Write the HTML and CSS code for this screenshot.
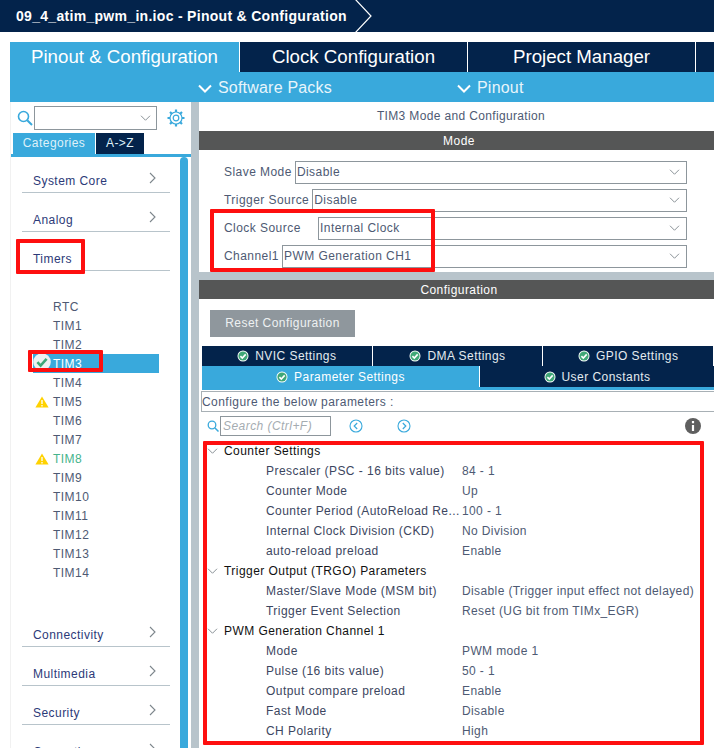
FILE: index.html
```html
<!DOCTYPE html>
<html lang="en">
<head>
	<meta charset="UTF-8">
	<title>Pinout &amp; Configuration</title>
	<link rel="stylesheet" href="styles.css">
</head>
<body>
	<svg class="defs" width="0" height="0">
		<symbol id="ok" viewBox="0 0 12 12">
			<circle cx="6" cy="6" r="5.5" fill="#fff"/>
			<circle cx="6" cy="6" r="4.6" fill="#3fa777"/>
			<path d="M3.4 6.1 5.3 8 8.7 4.4" fill="none" stroke="#fff" stroke-width="1.6"/>
		</symbol>
		<symbol id="bigOk" viewBox="0 0 18 18">
			<circle cx="9" cy="9" r="8.8" fill="#eef1f2"/>
			<path d="M4.4 9.2 7.6 12.6 13.6 5.8" fill="none" stroke="#3fa777" stroke-width="2.6"/>
		</symbol>
		<symbol id="warn" viewBox="0 0 14 12">
			<path d="M7 .5 13.6 11.5H.4Z" fill="#ffd200"/>
			<path d="M7 4v4M7 9v1.4" stroke="#fff" stroke-width="1.3"/>
		</symbol>
		<symbol id="down" viewBox="0 0 14 8">
			<path d="M1 1 7 7 13 1" fill="none" stroke="currentColor" stroke-width="1.2"/>
		</symbol>
		<symbol id="downBold" viewBox="0 0 14 9">
			<path d="M1 1.5 7 7.5 13 1.5" fill="none" stroke="#fff" stroke-width="2"/>
		</symbol>
		<symbol id="right" viewBox="0 0 7 12">
			<path d="M1 1 6 6 1 11" fill="none" stroke="#7d868c" stroke-width="1.1"/>
		</symbol>
	</svg>

	<!-- title bar -->
	<div class="crumb">
		<span class="crumbText">09_4_atim_pwm_in.ioc - Pinout &amp; Configuration</span>
		<svg class="crumbArrow" width="18" height="32" viewBox="0 0 18 32"><path d="M1 -1 17 16 1 33" fill="none" stroke="#fff" stroke-width="1.2"/></svg>
	</div>

	<div class="app">
		<div class="mainTabs">
			<div class="mainTab tabOn">Pinout &amp; Configuration</div>
			<div class="mainTab">Clock Configuration</div>
			<div class="mainTab">Project Manager</div>
			<div class="mainTab tabEnd"></div>
		</div>
		<div class="subBar">
			<div class="subItem subPacks"><svg class="subArrow"><use href="#downBold"/></svg>Software Packs</div>
			<div class="subItem subPinout"><svg class="subArrow"><use href="#downBold"/></svg>Pinout</div>
		</div>

		<div class="work">
			<!-- left side -->
			<div class="side">
				<div class="sideSearch">
					<svg class="lens" width="16" height="16" viewBox="0 0 16 16"><circle cx="6.5" cy="6.5" r="5" fill="none" stroke="#39a9dc" stroke-width="1.6"/><path d="M10.2 10.2 15 15" stroke="#39a9dc" stroke-width="2"/></svg>
					<div class="sideSelect"><svg class="selArrow"><use href="#down"/></svg></div>
					<svg class="gear" width="18" height="18" viewBox="0 0 18 18">
						<circle cx="9" cy="9" r="6" fill="none" stroke="#39a9dc" stroke-width="1.2"/>
						<circle cx="9" cy="9" r="2.8" fill="none" stroke="#39a9dc" stroke-width="1.2"/>
						<path d="M9 .5V3M9 15v2.5M.5 9H3M15 9h2.5M3 3l1.8 1.8M13.2 13.2 15 15M15 3l-1.8 1.8M4.8 13.2 3 15" stroke="#39a9dc" stroke-width="2.2"/>
					</svg>
				</div>
				<div class="sideTabs">
					<div class="sideTab sideTabOn">Categories</div>
					<div class="sideTab sideTabAz">A-&gt;Z</div>
				</div>
				<div class="sideBody">
					<div class="sideList">
						<div class="cat"><span>System Core</span><svg class="catArrow"><use href="#right"/></svg></div>
						<div class="cat"><span>Analog</span><svg class="catArrow"><use href="#right"/></svg></div>
						<div class="cat"><span>Timers</span></div>
						<ul class="timList">
							<li>RTC</li>
							<li>TIM1</li>
							<li>TIM2</li>
							<li class="timOn"><svg class="timIcon okIcon"><use href="#bigOk"/></svg>TIM3</li>
							<li>TIM4</li>
							<li><svg class="timIcon"><use href="#warn"/></svg>TIM5</li>
							<li>TIM6</li>
							<li>TIM7</li>
							<li class="timGreen"><svg class="timIcon"><use href="#warn"/></svg>TIM8</li>
							<li>TIM9</li>
							<li>TIM10</li>
							<li>TIM11</li>
							<li>TIM12</li>
							<li>TIM13</li>
							<li>TIM14</li>
						</ul>
						<div class="cat"><span>Connectivity</span><svg class="catArrow"><use href="#right"/></svg></div>
						<div class="cat"><span>Multimedia</span><svg class="catArrow"><use href="#right"/></svg></div>
						<div class="cat"><span>Security</span><svg class="catArrow"><use href="#right"/></svg></div>
						<div class="cat"><span>Computing</span><svg class="catArrow"><use href="#right"/></svg></div>
					</div>
					<div class="scroll"></div>
				</div>
			</div>

			<!-- right side -->
			<div class="panel">
				<div class="panelTitle">TIM3 Mode and Configuration</div>
				<div class="darkBar">Mode</div>
				<div class="modeBox">
					<div class="modeRow"><label>Slave Mode</label><div class="combo">Disable<svg class="selArrow"><use href="#down"/></svg></div></div>
					<div class="modeRow"><label>Trigger Source</label><div class="combo">Disable<svg class="selArrow"><use href="#down"/></svg></div></div>
					<div class="modeRow"><label class="wideLabel">Clock Source</label><div class="combo">Internal Clock<svg class="selArrow"><use href="#down"/></svg></div></div>
					<div class="modeRow"><label>Channel1</label><div class="combo">PWM Generation CH1<svg class="selArrow"><use href="#down"/></svg></div></div>
				</div>
				<div class="darkBar confBar">Configuration</div>
				<div class="resetRow"><div class="resetBtn">Reset Configuration</div></div>
				<div class="setTabs">
					<div class="setTab"><svg class="setIcon"><use href="#ok"/></svg>NVIC Settings</div>
					<div class="setTab"><svg class="setIcon"><use href="#ok"/></svg>DMA Settings</div>
					<div class="setTab"><svg class="setIcon"><use href="#ok"/></svg>GPIO Settings</div>
				</div>
				<div class="setTabs setTabs2">
					<div class="setTab setOn"><svg class="setIcon"><use href="#ok"/></svg>Parameter Settings</div>
					<div class="setTab setUser"><svg class="setIcon"><use href="#ok"/></svg>User Constants</div>
				</div>
				<div class="paramHint">Configure the below parameters :</div>
				<div class="findRow">
					<svg width="12" height="12" viewBox="0 0 12 12"><circle cx="5" cy="5" r="3.8" fill="none" stroke="#39a9dc" stroke-width="1.3"/><path d="M8 8 11.5 11.5" stroke="#39a9dc" stroke-width="1.5"/></svg>
					<div class="findInput">Search (Ctrl+F)</div>
					<svg class="navLeft" width="14" height="14" viewBox="0 0 14 14"><circle cx="7" cy="7" r="6" fill="none" stroke="#39a9dc" stroke-width="1.1"/><path d="M8.2 4 5.2 7 8.2 10" fill="none" stroke="#39a9dc" stroke-width="1.2"/></svg>
					<svg class="navRight" width="14" height="14" viewBox="0 0 14 14"><circle cx="7" cy="7" r="6" fill="none" stroke="#39a9dc" stroke-width="1.1"/><path d="M5.8 4 8.8 7 5.8 10" fill="none" stroke="#39a9dc" stroke-width="1.2"/></svg>
					<svg class="info" width="16" height="16" viewBox="0 0 16 16"><circle cx="8" cy="8" r="8" fill="#5f5f5f"/><path d="M8 3v2.2M8 7v6" stroke="#fff" stroke-width="2.2"/></svg>
				</div>
				<div class="tree">
					<div class="group"><svg class="treeArrow"><use href="#down"/></svg>Counter Settings</div>
					<div class="param"><span class="pName">Prescaler (PSC - 16 bits value)</span><span class="pVal">84 - 1</span></div>
					<div class="param"><span class="pName">Counter Mode</span><span class="pVal">Up</span></div>
					<div class="param"><span class="pName">Counter Period (AutoReload Re...</span><span class="pVal">100 - 1</span></div>
					<div class="param"><span class="pName">Internal Clock Division (CKD)</span><span class="pVal">No Division</span></div>
					<div class="param"><span class="pName">auto-reload preload</span><span class="pVal">Enable</span></div>
					<div class="group"><svg class="treeArrow"><use href="#down"/></svg>Trigger Output (TRGO) Parameters</div>
					<div class="param"><span class="pName">Master/Slave Mode (MSM bit)</span><span class="pVal">Disable (Trigger input effect not delayed)</span></div>
					<div class="param"><span class="pName">Trigger Event Selection</span><span class="pVal">Reset (UG bit from TIMx_EGR)</span></div>
					<div class="group"><svg class="treeArrow"><use href="#down"/></svg>PWM Generation Channel 1</div>
					<div class="param"><span class="pName">Mode</span><span class="pVal">PWM mode 1</span></div>
					<div class="param"><span class="pName">Pulse (16 bits value)</span><span class="pVal">50 - 1</span></div>
					<div class="param"><span class="pName">Output compare preload</span><span class="pVal">Enable</span></div>
					<div class="param"><span class="pName">Fast Mode</span><span class="pVal">Disable</span></div>
					<div class="param"><span class="pName">CH Polarity</span><span class="pVal">High</span></div>
				</div>
			</div>
		</div>
	</div>

	<!-- red marks drawn over the screenshot -->
	<div class="mark markTimers"></div>
	<div class="mark markTim3"></div>
	<div class="mark markClock"></div>
	<div class="mark markParams"></div>
</body>
</html>
```

FILE: styles.css
```css
*{
	margin: 0;
	padding: 0;
	box-sizing: border-box;
}

html, body{
	height: 748px;
	overflow: hidden;
}

body{
	position: relative;
	background-color: #fff;
	font-family: "Liberation Sans", Arial, sans-serif;
	font-size: 12px;
	letter-spacing: .45px;
	color: #4e5a73;
}

.defs{
	position: absolute;
}

/* title bar */
.crumb{
	height: 32px;
	background-color: #03234b;
	color: #fff;
	display: flex;
	align-items: center;
	padding-left: 16px;
}

.crumbText{
	font-size: 14px;
	font-weight: bold;
	letter-spacing: .3px;
}

.crumbArrow{
	margin-left: 7px;
}

.app{
	margin: 10px 0 0 10px;
}

/* top tabs */
.mainTabs{
	display: flex;
	height: 30px;
}

.mainTab{
	width: 228px;
	background-color: #03234b;
	border-right: 1px solid #fff;
	color: #fff;
	font-size: 18.7px;
	letter-spacing: 0;
	line-height: 30px;
	text-align: center;
}

.tabOn{
	width: 230px;
	background-color: #39a9dc;
}

.tabEnd{
	flex: 1;
	border-right: 0;
}

.subBar{
	height: 30px;
	padding-top: 2px;
	background-color: #39a9dc;
	color: #e8f5fb;
	font-size: 16px;
	letter-spacing: .2px;
	display: flex;
	align-items: center;
}

.subItem{
	display: flex;
	align-items: center;
}

.subPacks{
	margin-left: 188px;
	width: 259px;
}

.subArrow{
	width: 14px;
	height: 9px;
	margin-right: 6px;
}

/* left side */
.work{
	display: flex;
}

.side{
	width: 181px;
	border-left: 1px solid #f1f1f1;
}

.sideSearch{
	height: 31px;
	display: flex;
	align-items: center;
	padding-left: 6px;
}

.sideSelect{
	width: 123px;
	height: 24px;
	margin-left: 1px;
	border: 1px solid #8d969c;
	display: flex;
	align-items: center;
	justify-content: flex-end;
	padding-right: 5px;
}

.selArrow{
	width: 11px;
	height: 6px;
	color: #7d868c;
	flex: none;
}

.gear{
	margin-left: 10px;
}

.sideTabs{
	display: flex;
	height: 21px;
	padding-left: 2px;
}

.sideTab{
	line-height: 21px;
	text-align: center;
	color: #dff1f9;
}

.sideTabOn{
	width: 82px;
	background-color: #39a9dc;
}

.sideTabAz{
	width: 48px;
	margin-left: 1px;
	background-color: #03234b;
}

.sideBody{
	display: flex;
	border-top: 3px solid #39a9dc;
}

.sideList{
	width: 169px;
	padding-left: 11px;
}

.cat{
	height: 39px;
	width: 148px;
	border-bottom: 1px solid #b8c4cb;
	padding: 18px 14px 0 0;
	display: flex;
	justify-content: space-between;
	color: #2c3a78;
	line-height: 18px;
}

.cat span{
	margin-left: 11px;
}

.catArrow{
	width: 7px;
	height: 12px;
}

.sideBody .cat:first-child{
	height: 36px;
	padding-top: 15px;
}

.timList{
	list-style: none;
	height: 337px;
	padding-top: 26px;
}

.timList li{
	position: relative;
	height: 19px;
	line-height: 20px;
	margin-left: 11px;
	padding-left: 20px;
	width: 126px;
	white-space: nowrap;
}

.timOn{
	background-color: #39a9dc;
	color: #fff;
}

.timGreen{
	color: #45b48c;
}

.timIcon{
	position: absolute;
	left: 2px;
	top: 4px;
	width: 14px;
	height: 12px;
}

.okIcon{
	left: 0;
	top: -1px;
	width: 18px;
	height: 18px;
}

.scroll{
	width: 8px;
	height: 600px;
	background-color: #39a9dc;
	border-radius: 4px 4px 0 0;
}

/* right side */
.panel{
	width: 515px;
	margin-left: 8px;
	box-shadow: -8px 0 0 #b8c4cb;
}

.panelTitle{
	height: 29px;
	line-height: 28px;
	padding-left: 9px;
	letter-spacing: .35px;
	text-align: center;
}

.darkBar{
	height: 19px;
	line-height: 20px;
	padding-left: 5px;
	background-color: #555656;
	color: #fff;
	text-align: center;
}

.modeBox{
	height: 130px;
	padding: 11px 27px 0 25px;
	border-bottom: 8px solid #b8c4cb;
}

.modeRow{
	display: flex;
	align-items: center;
	height: 23px;
	margin-bottom: 5px;
}

.modeRow label{
	margin-right: 3px;
	white-space: nowrap;
	padding-bottom: 2px;
}

.wideLabel{
	width: 91px;
}

.combo{
	flex: 1;
	height: 23px;
	border: 1px solid #8d969c;
	padding: 0 6px 1px 1px;
	display: flex;
	justify-content: space-between;
	align-items: center;
}

.resetRow{
	height: 47px;
	padding: 11px 0 0 11px;
}

.resetBtn{
	width: 145px;
	height: 27px;
	line-height: 27px;
	background-color: #8f979d;
	color: #eef1f2;
	text-align: center;
}

.setTabs{
	display: flex;
	height: 20px;
	margin-left: 3px;
}

.setTab{
	flex: 1;
	background-color: #03234b;
	border-right: 1px solid #fff;
	color: #e4ebf0;
	display: flex;
	align-items: center;
	justify-content: center;
}

.setTabs2{
	height: 24px;
	border-bottom: 3px solid #39a9dc;
}

.setOn{
	flex: none;
	width: 278px;
	background-color: #39a9dc;
	color: #fff;
}

.setUser{
	border-right: 0;
}

.setIcon{
	width: 12px;
	height: 12px;
	margin-right: 6px;
}

.paramHint{
	height: 21px;
	line-height: 20px;
	margin: 1px 0 0 2px;
	border: 1px solid #a8b0b5;
	border-right: 0;
}

.findRow{
	height: 30px;
	display: flex;
	align-items: center;
	padding: 0 13px 2px 8px;
}

.findInput{
	width: 111px;
	height: 20px;
	line-height: 19px;
	margin-left: 1px;
	border: 1px solid #8d969c;
	padding-left: 2px;
	font-style: italic;
	color: #a5acb1;
}

.navLeft{
	margin-left: 18px;
}

.navRight{
	margin-left: 34px;
}

.info{
	margin-left: auto;
}

.tree{
	padding-left: 8px;
}

.group{
	height: 20px;
	line-height: 19px;
	color: #111;
	padding-left: 17px;
	position: relative;
}

.treeArrow{
	position: absolute;
	left: 0;
	top: 6px;
	width: 11px;
	height: 6px;
	color: #7d868c;
}

.param{
	height: 20px;
	line-height: 19px;
	padding-left: 59px;
	display: flex;
	white-space: nowrap;
}

.pName{
	width: 196px;
	color: #3c4660;
}

.pVal{
	letter-spacing: .38px;
}

/* red annotations */
.mark{
	position: absolute;
	border: 4px solid #fe0f0f;
	border-radius: 1px;
}

.markTimers{
	left: 16px;
	top: 239px;
	width: 69px;
	height: 35px;
}

.markTim3{
	left: 28px;
	top: 350px;
	width: 75px;
	height: 22px;
}

.markClock{
	left: 210px;
	top: 209px;
	width: 225px;
	height: 63px;
}

.markParams{
	left: 203px;
	top: 441px;
	width: 501px;
	height: 304px;
}
```
